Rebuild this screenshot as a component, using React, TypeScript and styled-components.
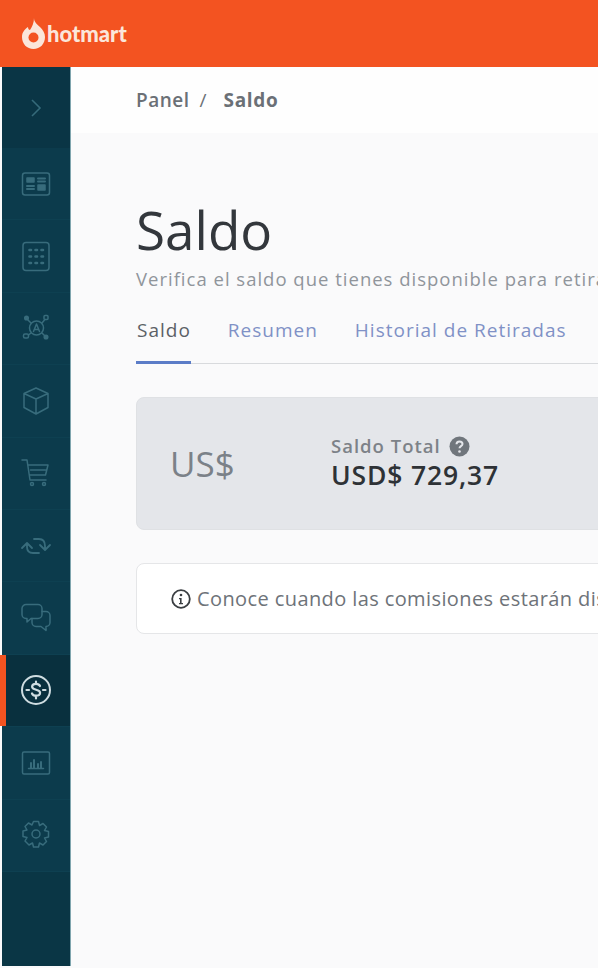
import styled, { createGlobalStyle } from "styled-components";
import type { ReactNode } from "react";

const Global = createGlobalStyle`
  html, body {
    margin: 0;
    padding: 0;
    height: 100%;
    background: #fafafb;
    overflow: hidden;
  }
  #root {
    height: 100%;
  }
`;

const Page = styled.div`
  width: 598px;
  height: 968px;
  display: flex;
  flex-direction: column;
  overflow: hidden;
  background: #fafafb;
  font-family: "Open Sans", "Noto Sans", sans-serif;
`;

const Header = styled.header`
  flex: 0 0 67px;
  background: #f35321;
  display: flex;
  align-items: center;
  padding-left: 21px;
  gap: 1px;
`;

const LogoText = styled.span`
  font-family: "Lato", sans-serif;
  font-weight: 900;
  font-size: 22px;
  color: #fbe6da;
`;

const Body = styled.div`
  flex: 1;
  display: flex;
  min-height: 0;
`;

const Sidebar = styled.nav`
  flex: 0 0 68px;
  margin-left: 2px;
  margin-bottom: 2px;
  background: #0a3645;
  border-right: 1px solid #7fa5ae;
  display: flex;
  flex-direction: column;
`;

const Toggle = styled.div`
  flex: 0 0 81px;
  display: flex;
  align-items: center;
  justify-content: center;
  color: #356a7a;
  background: #0a3545;
`;

const NavItem = styled.div<{ $active?: boolean }>`
  flex: 0 0 72.4px;
  position: relative;
  display: flex;
  align-items: center;
  justify-content: center;
  box-sizing: border-box;
  color: ${(props) => (props.$active ? "#cfdde1" : "#386c7c")};
  background: ${(props) => (props.$active ? "#09303e" : "#0c3b4c")};
  border-bottom: 1px solid #0e4051;

  ${(props) =>
    props.$active &&
    `&::before {
      content: "";
      position: absolute;
      left: -2px;
      top: 0;
      bottom: 0;
      width: 6px;
      background: #f35321;
    }`}
`;

const Main = styled.main`
  flex: 1;
  min-width: 0;
  display: flex;
  flex-direction: column;
`;

const Breadcrumb = styled.div`
  flex: 0 0 66px;
  background: #fefefe;
  display: flex;
  align-items: center;
  padding-left: 65px;
  font-size: 19px;
  color: #6b7076;
`;

const Crumb = styled.span<{ $current?: boolean }>`
  font-weight: ${(props) => (props.$current ? 700 : 600)};
  letter-spacing: ${(props) => (props.$current ? "0.7px" : "0.5px")};
`;

const CrumbSep = styled.span`
  margin: 0 17px 0 10px;
`;

const Content = styled.div`
  padding: 66px 0 0 65px;
  display: flex;
  flex-direction: column;
  width: 700px;
`;

const Title = styled.h1`
  margin: 0;
  font-size: 53px;
  line-height: 62px;
  font-weight: 400;
  color: #33373c;
`;

const Subtitle = styled.p`
  margin: 6px 0 0;
  font-size: 18.5px;
  line-height: 24px;
  letter-spacing: 1px;
  color: #90959b;
  white-space: nowrap;
`;

const Tabs = styled.div`
  margin-top: 24px;
  height: 49px;
  display: flex;
  gap: 36px;
  box-sizing: border-box;
  border-bottom: 1px solid #d8dadd;
  margin-right: -40px;
`;

const Tab = styled.div<{ $active?: boolean }>`
  height: 49px;
  box-sizing: border-box;
  padding-top: 3px;
  padding-left: 1px;
  font-size: 19px;
  line-height: 24px;
  letter-spacing: 1px;
  color: ${(props) => (props.$active ? "#5c6166" : "#8091c6")};
  border-bottom: ${(props) => (props.$active ? "3px solid #5b7cc7" : "none")};
`;

const BalanceCard = styled.div`
  margin-top: 33px;
  height: 133px;
  box-sizing: border-box;
  border: 1px solid #dfe1e4;
  border-radius: 8px;
  background: #e4e6ea;
  display: flex;
  align-items: center;
  padding-left: 33px;
  margin-right: -40px;
`;

const Currency = styled.div`
  width: 161px;
  font-size: 35px;
  color: #7b8188;
`;

const BalanceInfo = styled.div`
  display: flex;
  flex-direction: column;
`;

const BalanceLabel = styled.div`
  display: flex;
  align-items: center;
  gap: 8px;
  font-size: 18.5px;
  line-height: 24px;
  font-weight: 600;
  letter-spacing: 1px;
  color: #7d8288;
`;

const BalanceValue = styled.div`
  font-size: 26.5px;
  line-height: 35px;
  font-weight: 600;
  letter-spacing: 0.85px;
  color: #2e3236;
`;

const InfoCard = styled.div`
  margin-top: 33px;
  height: 71px;
  box-sizing: border-box;
  border: 1px solid #e5e6e8;
  border-radius: 8px;
  background: #ffffff;
  display: flex;
  align-items: center;
  gap: 6px;
  padding-left: 34px;
  margin-right: -40px;
  font-size: 20px;
  letter-spacing: 0.4px;
  color: #6e7379;
  white-space: nowrap;
`;

function NavIcon({ children }: { children: ReactNode }) {
  return (
    <svg
      width="32"
      height="32"
      viewBox="0 0 32 32"
      fill="none"
      stroke="currentColor"
      strokeWidth="1.5"
      strokeLinecap="round"
      strokeLinejoin="round"
    >
      {children}
    </svg>
  );
}

function Logo() {
  return (
    <svg width="25" height="33" viewBox="0 0 25 33">
      <path
        d="M13 1c0 4 3 6 6 9 3 3 5 6 5 10 0 7-5 12-11.500 12S1 27 1 20c0-5 3-8 6-10 0 2 1 3 2 3 2-3 4-7 4-12z"
        fill="#fbe6da"
      />
      <circle cx="12.500" cy="20.500" r="5" fill="#f35321" />
    </svg>
  );
}

export default function App() {
  return (
    <Page>
      <Global />
      <Header>
        <Logo />
        <LogoText>hotmart</LogoText>
      </Header>
      <Body>
        <Sidebar>
          <Toggle>
            <svg width="14" height="20" viewBox="0 0 14 20" fill="none" stroke="currentColor" strokeWidth="1.6">
              <path d="M3 2l8 8-8 8" />
            </svg>
          </Toggle>
          <NavItem>
            <NavIcon>
              <rect x="2.500" y="5" width="27" height="22" rx="2.500" />
              <path fill="currentColor" d="M7 10h7v4H7zM18 17h7v5h-7z" />
              <path d="M7 18h7M7 21h7M18 10.500h7M18 13.500h7" strokeWidth="2" />
            </NavIcon>
          </NavItem>
          <NavItem>
            <NavIcon>
              <rect x="3" y="2.500" width="26" height="28" rx="3" />
              <path
                strokeWidth="2.600"
                d="M9.500 10h1.500M15.500 10h1.500M21.500 10h1.500M9.500 16.500h1.500M15.500 16.500h1.500M21.500 16.500h1.500M9.500 23h1.500M15.500 23h1.500M21.500 23h1.500"
              />
            </NavIcon>
          </NavItem>
          <NavItem>
            <NavIcon>
              <circle cx="16.500" cy="16" r="7" />
              <path d="M13.500 19.500l3-7.500 3 7.500M14.500 17.500h4M11 11L8 8M22 11l2.500-3M11 21l-2.500 2M22 21l2.500 2.500" />
              <circle cx="6.500" cy="6" r="1.800" fill="currentColor" />
              <rect x="24" y="3.500" width="4" height="4" rx="1" />
              <rect x="3.500" y="22" width="5" height="4" rx="1.500" />
              <circle cx="26" cy="25" r="1.800" fill="currentColor" />
            </NavIcon>
          </NavItem>
          <NavItem>
            <NavIcon>
              <path d="M16 3l12 5.500v14L16 29 4 22.500v-14zM4 8.500L16 14l12-5.500M16 14v15" />
            </NavIcon>
          </NavItem>
          <NavItem>
            <NavIcon>
              <path d="M2 3h5l3 20h16M8 8h20l-2.500 10H10M10.500 13h15" />
              <circle cx="12" cy="27" r="1.500" />
              <circle cx="24" cy="27" r="1.500" />
            </NavIcon>
          </NavItem>
          <NavItem>
            <NavIcon>
              <path
                strokeWidth="1.800"
                d="M2 18l5-5 5 5M7 14v3c0 4 2 6 6 6h6M30 15l-5 5-5-5M25 19v-3c0-4-2-7-6-7h-5"
              />
            </NavIcon>
          </NavItem>
          <NavItem>
            <NavIcon>
              <path d="M6 2.500h12a4 4 0 014 4v6a4 4 0 01-4 4h-7l-4 3.500v-3.500H6a4 4 0 01-4-4v-6a4 4 0 014-4z" />
              <path d="M22 9.500h4a4 4 0 014 4v7a4 4 0 01-4 4v4l-5-4h-5a4 4 0 01-4-4v-4" />
            </NavIcon>
          </NavItem>
          <NavItem $active>
            <NavIcon>
              <circle cx="16" cy="16" r="14" strokeWidth="2" />
              <path
                strokeWidth="2.200"
                d="M20 12c-.6-1.400-2-2.200-4-2.200-2.300 0-3.900 1.100-3.900 2.900 0 4 8 2 8 6 0 1.900-1.700 3-4.100 3-2 0-3.400-.8-4-2.200M16 7.500v2M16 22.500v2M6.500 16H9M23 16h2.500"
              />
            </NavIcon>
          </NavItem>
          <NavItem>
            <NavIcon>
              <rect x="2.500" y="5" width="27" height="22" rx="1.500" />
              <path strokeWidth="2" d="M11 21v-5M14 21v-8M18 21v-4M21 21v-6" />
              <path d="M8.500 21.500h15" />
            </NavIcon>
          </NavItem>
          <NavItem>
            <NavIcon>
              <path d="M13.500 2.500h5l1 4 3.500-2 3.500 3.500-2 3.500 4 1v5.500l-4 1 2 3.500-3.500 3.500-3.500-2-1 4h-5l-1-4-3.500 2L5 22l2-3.500-4-1V12l4-1-2-3.500L8.500 4l3.500 2z" />
              <circle cx="16" cy="15" r="4" />
            </NavIcon>
          </NavItem>
        </Sidebar>
        <Main>
          <Breadcrumb>
            <Crumb>Panel</Crumb>
            <CrumbSep>/</CrumbSep>
            <Crumb $current>Saldo</Crumb>
          </Breadcrumb>
          <Content>
            <Title>Saldo</Title>
            <Subtitle>Verifica el saldo que tienes disponible para retirar</Subtitle>
            <Tabs>
              <Tab $active>Saldo</Tab>
              <Tab>Resumen</Tab>
              <Tab>Historial de Retiradas</Tab>
            </Tabs>
            <BalanceCard>
              <Currency>US$</Currency>
              <BalanceInfo>
                <BalanceLabel>
                  Saldo Total
                  <svg width="21" height="21" viewBox="0 0 21 21">
                    <circle cx="10.500" cy="10.500" r="10" fill="#70767c" />
                    <path d="M7.500 8.200c0-1.800 1.300-2.800 3-2.800s3 1 3 2.500c0 2.200-3 2.200-3 4.400" fill="none" stroke="#e4e6ea" strokeWidth="2" />
                    <circle cx="10.500" cy="15.500" r="1.300" fill="#e4e6ea" />
                  </svg>
                </BalanceLabel>
                <BalanceValue>USD$ 729,37</BalanceValue>
              </BalanceInfo>
            </BalanceCard>
            <InfoCard>
              <svg width="20" height="20" viewBox="0 0 20 20">
                <circle cx="10" cy="10" r="8.800" fill="none" stroke="#3a3e42" strokeWidth="1.800" />
                <circle cx="10" cy="6" r="1.300" fill="#3a3e42" />
                <path d="M8 9h2.600v5H12v1.300H8V14h1V10.300H8z" fill="#3a3e42" />
              </svg>
              Conoce cuando las comisiones estarán disponibles
            </InfoCard>
          </Content>
        </Main>
      </Body>
    </Page>
  );
}
